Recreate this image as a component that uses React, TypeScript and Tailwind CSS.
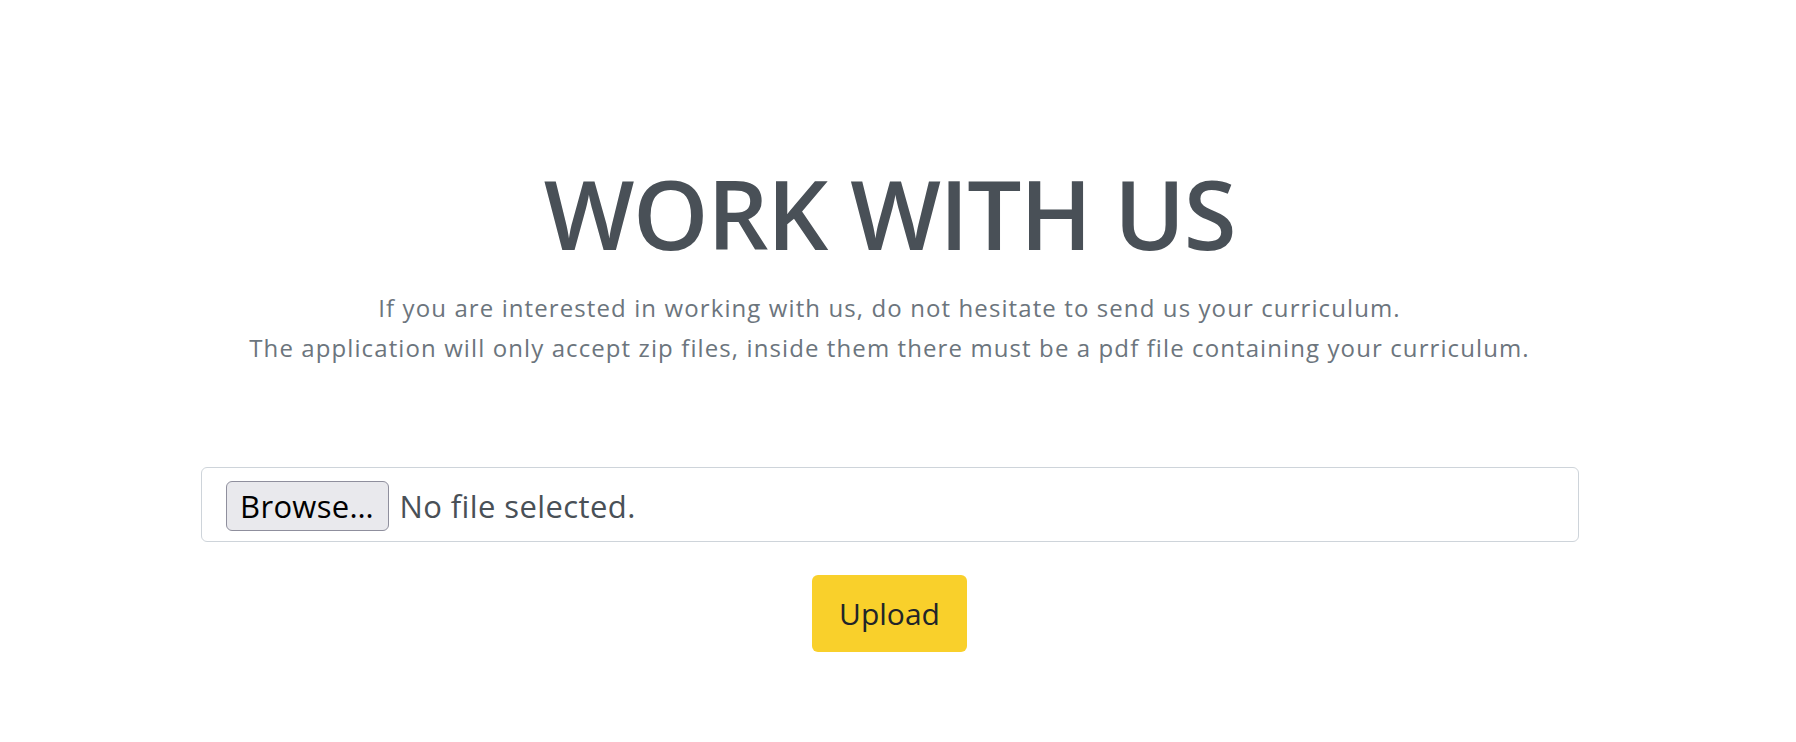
export default function App() {
  return (
    <div className="min-h-[742px] w-full bg-white pr-[17px]" style={{ fontFamily: '"Open Sans", "Noto Sans", sans-serif' }}>
      <div className="mx-auto flex w-[1378px] flex-col items-center pt-[158px]">
        <h1 className="text-[96px] font-semibold leading-[110px] tracking-[-1.5px] text-[#495057]">WORK WITH US</h1>
        <div className="mt-[20px] text-center text-[24px] leading-[40px] tracking-[1.1px] text-[#6c757d]">
          <p>If you are interested in working with us, do not hesitate to send us your curriculum.</p>
          <p>The application will only accept zip files, inside them there must be a pdf file containing your curriculum.</p>
        </div>
        <div className="mt-[99px] flex h-[75px] w-full items-start rounded-[6px] border border-[#ced4da] bg-white pl-[24px] pt-[13px]">
          <button className="flex h-[50px] w-[163px] items-center justify-center rounded-[6px] border border-[#8f8f9d] bg-[#e9e9ed] text-[31px] tracking-[0.3px] text-[#000]">
            Browse…
          </button>
          <span className="ml-[11px] text-[31px] leading-[50px] tracking-[0.4px] text-[#495057]">No file selected.</span>
        </div>
        <button className="mt-[33px] h-[77px] w-[155px] rounded-[6px] bg-[#f9d02b] text-[30px] text-[#212529]">
          Upload
        </button>
      </div>
    </div>
  );
}
